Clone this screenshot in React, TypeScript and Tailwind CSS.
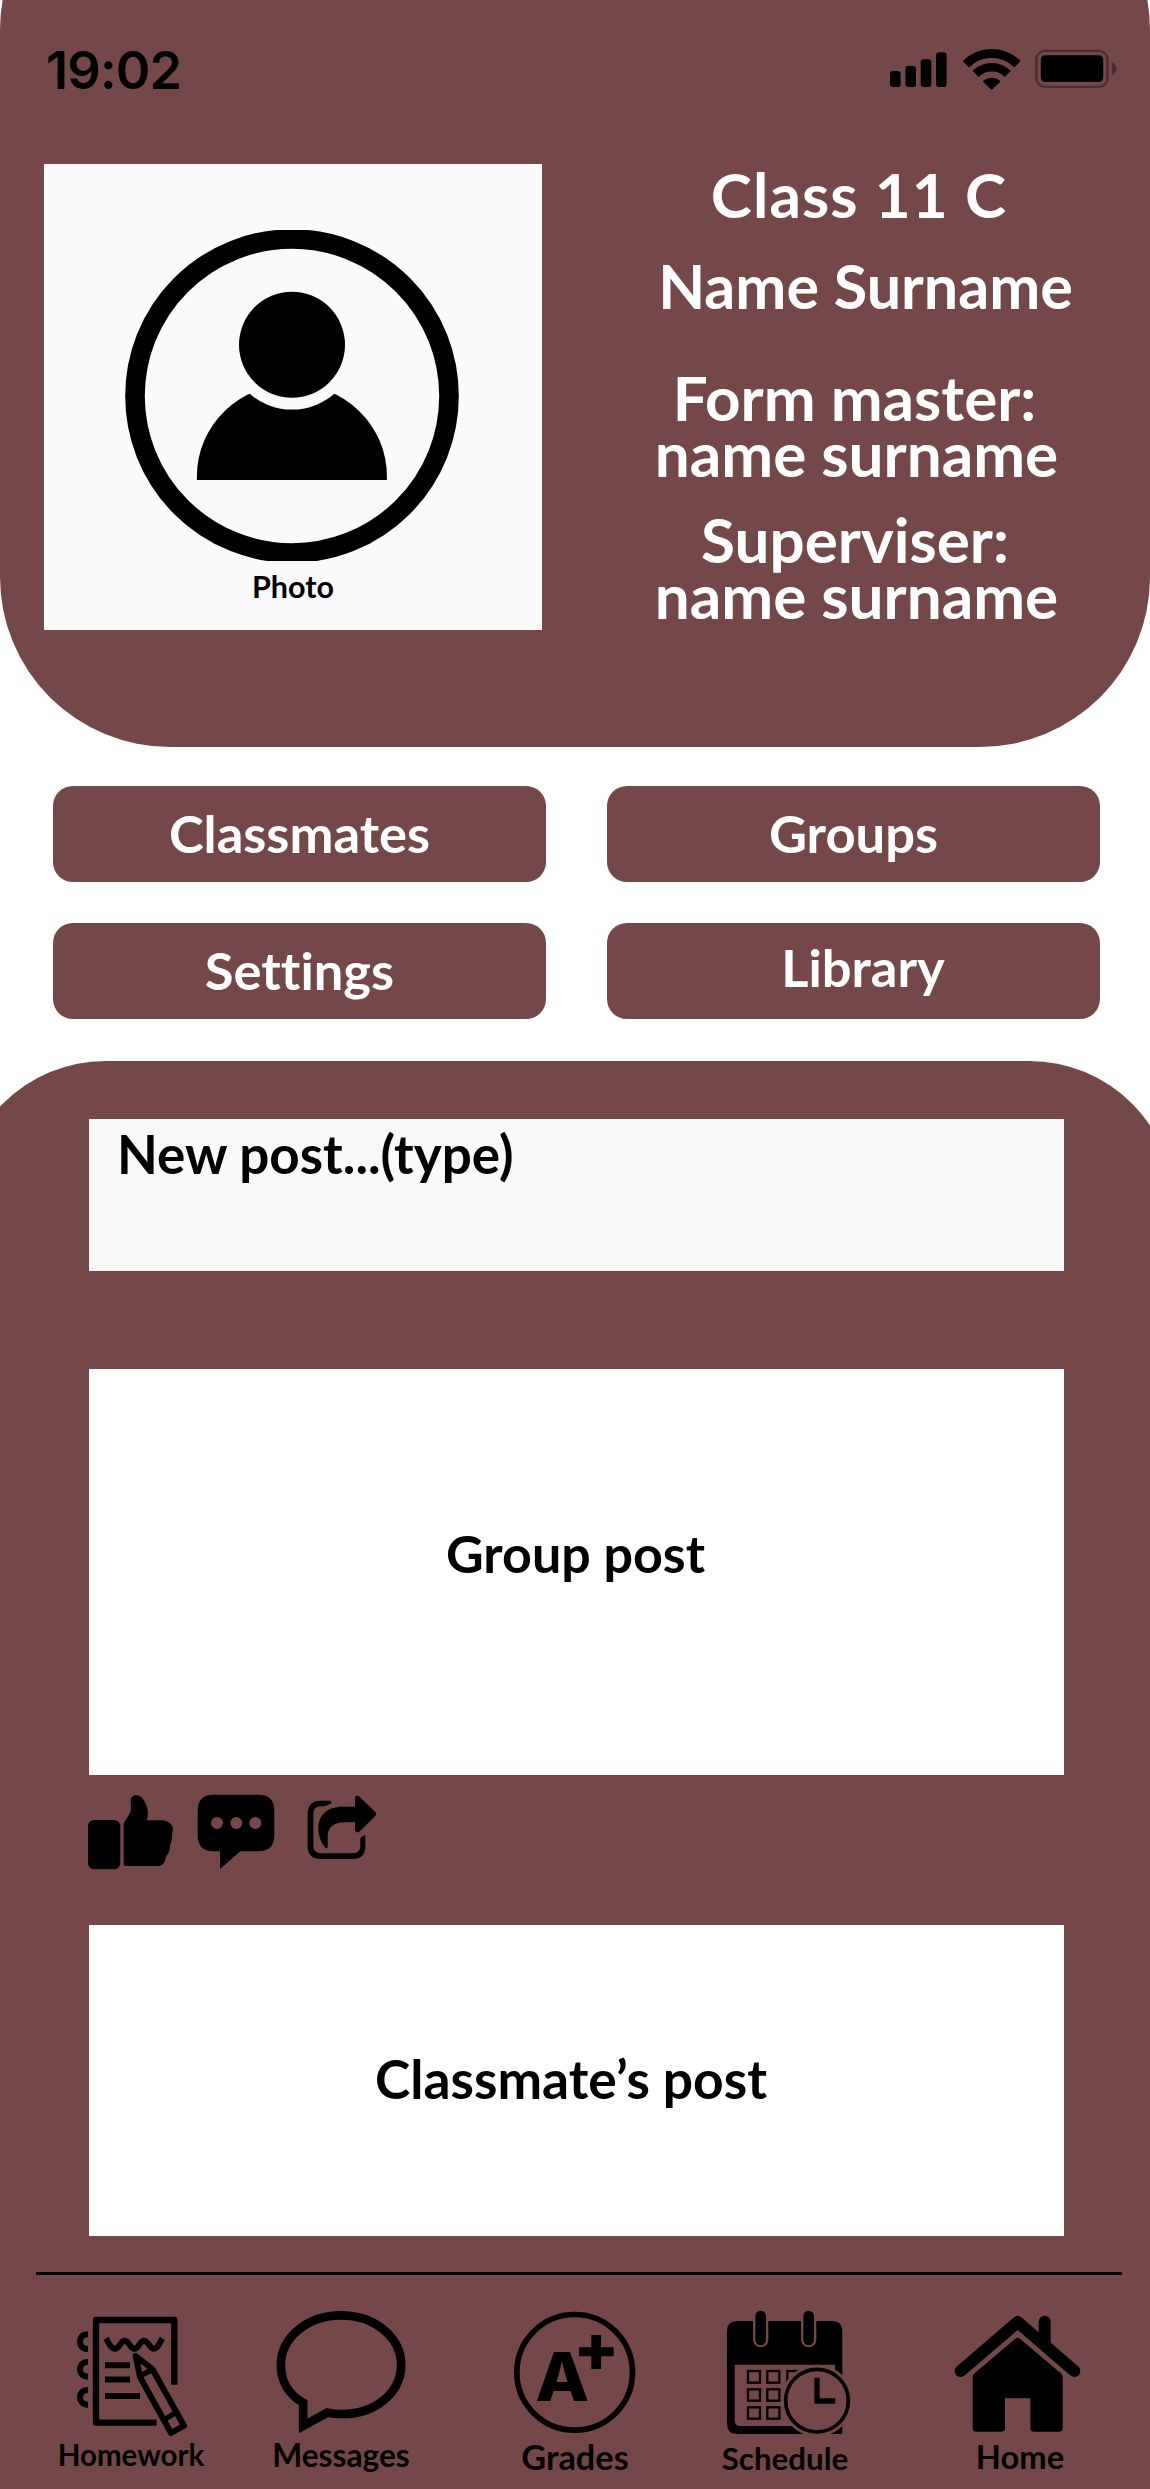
import React from "react";

function StatusIcons() {
  return (
    <svg className="h-[46px] w-[230px]" viewBox="888 46 230 46" aria-hidden="true">
      <rect x="890" y="71" width="10.6" height="16" rx="3" />
      <rect x="905.4" y="66" width="10.6" height="21" rx="3" />
      <rect x="920.7" y="59.3" width="10.6" height="27.7" rx="3" />
      <rect x="936" y="52.3" width="10.6" height="34.7" rx="3" />
      <g fill="none" stroke="#000">
        <path d="M965.9 64.2a36.5 36.5 0 0 1 51.6 0" strokeWidth="9" />
        <path d="M975.6 73.9a22.8 22.8 0 0 1 32.2 0" strokeWidth="8.6" />
      </g>
      <path d="M991.7 90l-8.9-8.6a12.6 12.6 0 0 1 17.8 0z" />
      <rect x="1036.4" y="50.9" width="71" height="36" rx="8.5" fill="none" stroke="#4b2e2f" strokeWidth="2.4" />
      <rect x="1040.8" y="55.3" width="62.4" height="26.8" rx="4.5" />
      <path d="M1111.8 62.6q4.8 1.8 4.8 6.2t-4.8 6.2z" fill="#4b2e2f" />
    </svg>
  );
}

function AvatarIcon() {
  return (
    <svg className="mr-[3px] h-[331px] w-[334px]" viewBox="124.7 230 334 331" aria-hidden="true">
      <defs>
        <mask id="bust">
          <rect x="124" y="230" width="335" height="331" fill="#fff" />
          <circle cx="291.7" cy="344.8" r="64.8" fill="#000" />
        </mask>
      </defs>
      <circle cx="291.7" cy="396" r="157" fill="none" stroke="#000" strokeWidth="19.6" />
      <circle cx="291.7" cy="344.8" r="53" />
      <path d="M196.6 480v-4a95 92 0 0 1 190 0v4z" mask="url(#bust)" />
    </svg>
  );
}

function LikeIcon() {
  return (
    <svg className="h-[78px] w-[86px]" viewBox="84 100 258 234" aria-hidden="true">
      <rect x="84" y="181" width="97" height="148" rx="19" />
      <path d="M191 192C199 174 213 163 213 145L212 124C212 113 220 107 229 107C241 107 249 116 256 130C264 146 266 160 261 182H305C324 183 339 194 339 209C339 216 335 221 336 229C337 241 334 249 330 256C331 270 327 281 319 288C316 305 309 319 296 319H196Q191 319 191 314Z" />
    </svg>
  );
}

function CommentIcon() {
  return (
    <svg className="ml-[22px] h-[78px] w-[80px]" viewBox="408 100 240 234" aria-hidden="true">
      <path
        fillRule="evenodd"
        d="M460 105H595Q643 105 643 153V227Q643 275 595 275H541L480 328V275H460Q413 275 413 227V153Q413 105 460 105ZM453 190a18 18 0 1 0 36 0a18 18 0 1 0-36 0M511 190a18 18 0 1 0 36 0a18 18 0 1 0-36 0M568 190a18 18 0 1 0 36 0a18 18 0 1 0-36 0"
      />
    </svg>
  );
}

function ShareIcon() {
  return (
    <svg className="ml-[30px] h-[78px] w-[72px]" viewBox="738 100 216 234" aria-hidden="true">
      <path d="M810 123Q819 127 812 132L794 140H783Q760 140 760 163V259Q760 281 783 281H878Q901 281 901 259V235Q908 228 916 226V259Q916 298 878 298H783Q743 298 743 259V163Q743 123 783 123Z" />
      <path d="M885 141V114Q888 105 896 109L946 157Q951 163 946 169L897 217Q888 221 885 212V188H855C818 188 803 206 803 232V262Q801 269 796 265C782 247 775 228 775 207C775 168 798 141 850 141Z" />
    </svg>
  );
}

function HomeworkIcon() {
  return (
    <svg className="h-[130px] w-[160px]" viewBox="153 264 480 390" aria-hidden="true">
      <g fill="none" stroke="#000" strokeWidth="18">
        <path d="M523 494V300H288V608H470" strokeLinejoin="round" strokeWidth="19" />
        <path d="M264 343C247 343 240 352 240 364.500C240 377 247 387 264 387" />
        <path d="M264 426C247 426 240 436 240 448C240 460 247 470 264 470" />
        <path d="M264 510C247 510 240 520 240 532C240 544 247 554 264 554" />
        <path d="M315 435.500H390M315 478.500H390M315 528H420" />
        <path d="M318 355C328 371 332 386 345 386C359 386 361 362 374 362C387 362 390 386 403 386C417 386 419 362 432 362C445 362 449 386 460 386C474 386 478 369 487 355" />
        <path d="M407 408L457 447L552 617L513 639L420 471Z" strokeLinejoin="round" />
        <path d="M417 469L461 447M492 599L532 575" strokeWidth="16" />
      </g>
      <path d="M400 402L432 424L414 440Z" />
    </svg>
  );
}

function MessagesIcon() {
  return (
    <svg className="h-[130px] w-[160px]" viewBox="784.5 264 480 390" aria-hidden="true">
      <path
        d="M911 548C868 524 844 484 844 435C844 352 924 286 1025 286C1126 286 1205 352 1205 435C1205 518 1127 582 1030 582C1014 582 999 581 983 578L911 618Z"
        fill="none"
        stroke="#000"
        strokeWidth="26"
      />
    </svg>
  );
}

function GradesIcon() {
  return (
    <svg className="h-[130px] w-[160px]" viewBox="166 264 480 390" aria-hidden="true">
      <circle cx="405" cy="457" r="173.500" fill="none" stroke="#000" strokeWidth="17" />
      <text x="368" y="543" textAnchor="middle" fontSize="203" fontWeight="800" textLength="162" lengthAdjust="spacingAndGlyphs" className="font-['Inter',sans-serif]">
        A
      </text>
      <path d="M455 345H484V382H522V409H484V447H455V409H418V382H455Z" />
    </svg>
  );
}

function ScheduleIcon() {
  return (
    <svg className="h-[130px] w-[160px]" viewBox="795 264 480 390" aria-hidden="true">
      <defs>
        <mask id="calendar">
          <rect x="795" y="264" width="480" height="390" fill="#fff" />
          <path d="M962 290V359M1106 290V359" stroke="#000" strokeWidth="46" strokeLinecap="round" />
          <circle cx="1131" cy="542" r="108" fill="#000" />
        </mask>
      </defs>
      <g mask="url(#calendar)">
        <path
          fillRule="evenodd"
          d="M892 303H1176Q1207 303 1207 334V642H892Q861 642 861 611V334Q861 303 892 303ZM884 434V600Q884 618 902 618H1185V434Z"
        />
        <g fill="none" stroke="#000" strokeWidth="7">
          <rect x="924" y="453" width="36" height="35" />
          <rect x="982" y="453" width="36" height="35" />
          <rect x="1042" y="453" width="36" height="35" />
          <rect x="924" y="508" width="36" height="34" />
          <rect x="982" y="508" width="36" height="34" />
          <rect x="924" y="562" width="36" height="34" />
          <rect x="982" y="562" width="36" height="34" />
        </g>
      </g>
      <path d="M962 288V360M1106 288V360" stroke="#000" strokeWidth="32" strokeLinecap="round" />
      <circle cx="1131" cy="542" r="94" fill="none" stroke="#000" strokeWidth="11" />
      <path d="M1131 473V543H1186" fill="none" stroke="#000" strokeWidth="16" />
    </svg>
  );
}

function HomeIcon() {
  return (
    <svg className="h-[130px] w-[160px]" viewBox="271 264 480 390" aria-hidden="true">
      <path d="M333 453L504 306L674 453" fill="none" stroke="#000" strokeWidth="36" strokeLinecap="round" strokeLinejoin="round" />
      <path d="M585 305V365" stroke="#000" strokeWidth="36" strokeLinecap="round" />
      <path d="M497 356Q504 350 511 356L635 461Q639 465 639 470V625Q639 635 629 635H552Q542 635 542 625V535H466V625Q466 635 456 635H379Q369 635 369 625V470Q369 465 373 461Z" />
    </svg>
  );
}

const button = "flex h-[96px] items-center justify-center rounded-[20px] bg-[#744848] text-white";

export default function App() {
  return (
    <div className="h-[2489px] w-[1150px] overflow-hidden bg-white font-['Lato',sans-serif] font-bold text-black [font-variant-ligatures:none]">
      <header className="-mt-[140px] h-[887px] rounded-[170px] bg-[#744848] pt-[140px]">
        <div className="flex h-[164px] items-start justify-between pr-[32px] pl-[46px] font-['Inter',sans-serif]">
          <span className="mt-[44px] text-[52.5px] leading-[52px] font-semibold tracking-[-0.9px]">19:02</span>
          <div className="mt-[46px]">
            <StatusIcons />
          </div>
        </div>
        <div className="flex pl-[44px]">
          <div className="flex h-[466px] w-[498px] shrink-0 flex-col items-center bg-[#fbf9fb] pt-[66px]">
            <AvatarIcon />
            <span className="mt-[9px] text-[30.5px] leading-[32px]">Photo</span>
          </div>
          <div className="mt-[2px] ml-[21px] w-[587px] text-center text-[62px] leading-[56px] text-white">
            <h1 className="pl-[5px] tracking-[1.1px]">Class 11 C</h1>
            <p className="mt-[36px] pl-[18px] text-[61px]">Name Surname</p>
            <div className="mt-[55px]">
              <p className="pr-[4px]">Form master:</p>
              <p>name surname</p>
            </div>
            <div className="mt-[30px]">
              <p className="pr-[3px]">Superviser:</p>
              <p>name surname</p>
            </div>
          </div>
        </div>
      </header>

      <div className="mt-[39px] ml-[53px] grid w-[1047px] grid-cols-2 gap-x-[61px] gap-y-[41px] text-[52.5px] leading-[60px]">
        <button className={`${button} pb-[3px]`}>Classmates</button>
        <button className={`${button} pb-[3px]`}>Groups</button>
        <button className={`${button} pb-[3px]`}>Settings</button>
        <button className={`${button} pb-[9px] pl-[19px]`}>Library</button>
      </div>

      <main className="mt-[42px] -ml-[40px] h-[1428px] w-[1215px] rounded-t-[146px] bg-[#744848] pl-[40px]">
        <div className="w-[1150px] pt-[58px]">
          <section className="ml-[89px] w-[975px]">
            <div className="h-[152px] bg-[#f9f9f9] pt-[5px] pl-[28px] text-[53px] leading-[60px]">New post...(type)</div>
            <article className="mt-[98px] flex h-[406px] items-center justify-center bg-white pr-[2px] pb-[39px] text-[52px] leading-[60px]">
              Group post
            </article>
            <div className="mt-[18px] -ml-px flex">
              <LikeIcon />
              <CommentIcon />
              <ShareIcon />
            </div>
            <article className="mt-[54px] flex h-[311px] items-center justify-center bg-white pr-[11px] pb-[6px] text-[53.3px] leading-[60px]">
              Classmate’s post
            </article>
          </section>
          <hr className="mt-[36px] ml-[36px] w-[1086px] border-0 border-t-[3px] border-black" />
          <nav className="flex pt-[33px] text-center leading-[32px]">
            <a className="ml-[51px] w-[160px]">
              <HomeworkIcon />
              <span className="mt-px block text-[29.5px]">Homework</span>
            </a>
            <a className="ml-[50px] w-[160px]">
              <MessagesIcon />
              <span className="mt-px block text-[31.7px]">Messages</span>
            </a>
            <a className="ml-[74px] w-[160px]">
              <GradesIcon />
              <span className="mt-[3px] block text-[34.3px]">Grades</span>
            </a>
            <a className="ml-[50px] w-[160px]">
              <ScheduleIcon />
              <span className="mt-[4px] block text-[31.3px]">Schedule</span>
            </a>
            <a className="ml-[75px] w-[160px]">
              <HomeIcon />
              <span className="mt-[3px] block text-[32.7px]">Home</span>
            </a>
          </nav>
        </div>
      </main>
    </div>
  );
}
